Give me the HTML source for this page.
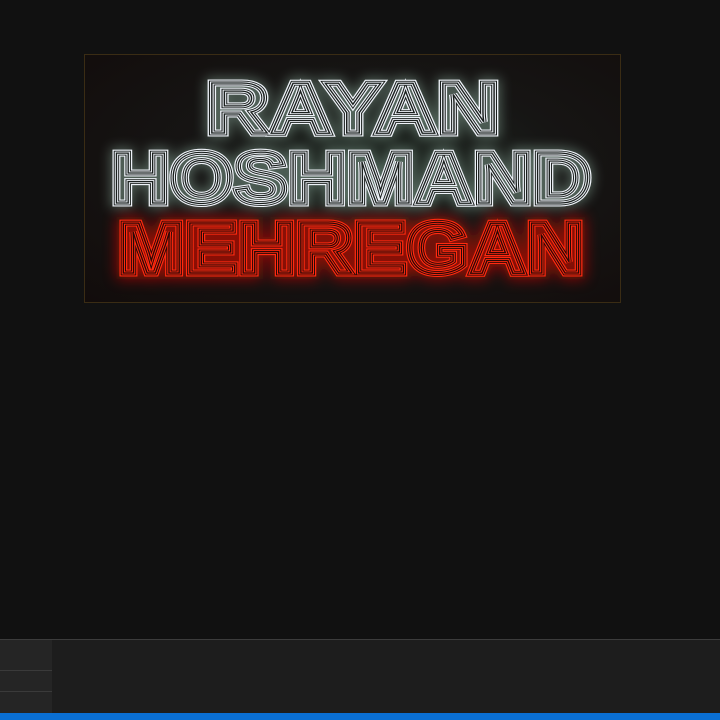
<!DOCTYPE html>
<html><head><style>
html,body{margin:0;padding:0;width:720px;height:720px;overflow:hidden;background:#111;}
.box{position:absolute;left:84px;top:54px;width:535px;height:247px;border:1px solid #3a2c14;background:radial-gradient(ellipse at 55% 45%,#1e2721 0%,#161514 45%,#120c0b 100%);}
.bottom{position:absolute;left:0;top:639px;width:720px;height:74px;background:#1d1d1d;border-top:1px solid #3c3c3c;}
.lp{position:absolute;left:0;top:640px;width:52px;height:73px;background:#252525;}
.lp div{position:absolute;left:0;width:52px;height:1px;background:#3a3a3a;}
.blue{position:absolute;left:0;top:713px;width:720px;height:7px;background:#0a6fd3;}
svg{position:absolute;left:0;top:0;}
</style></head><body>
<div class="box"></div>
<svg width="720" height="320">
<defs>
<filter id="gw" x="-20%" y="-40%" width="140%" height="180%"><feGaussianBlur stdDeviation="6"/></filter>
<filter id="gr" x="-20%" y="-40%" width="140%" height="180%"><feGaussianBlur stdDeviation="7"/></filter>
</defs>
<g font-family="Liberation Sans, sans-serif" font-size="72" font-weight="bold" fill="none" text-anchor="start">
 <g filter="url(#gw)" opacity="0.5">
  <text x="206" y="133" textLength="294" lengthAdjust="spacingAndGlyphs" stroke="#8fb0a0" stroke-width="10">RAYAN</text>
  <text x="111" y="203" textLength="480" lengthAdjust="spacingAndGlyphs" stroke="#8fb0a0" stroke-width="10">HOSHMAND</text>
 </g>
 <g filter="url(#gr)" opacity="0.7">
  <text x="118" y="273" textLength="466" lengthAdjust="spacingAndGlyphs" stroke="#c01000" stroke-width="12">MEHREGAN</text>
 </g>
 <g>
  <text x="206" y="133" textLength="294" lengthAdjust="spacingAndGlyphs" stroke="#eef2f8" stroke-width="7">RAYAN</text>
  <text x="206" y="133" textLength="294" lengthAdjust="spacingAndGlyphs" stroke="#1a1f1d" stroke-width="4.8">RAYAN</text>
  <text x="206" y="133" textLength="294" lengthAdjust="spacingAndGlyphs" stroke="#eef2f8" stroke-width="3">RAYAN</text>
  <text x="206" y="133" textLength="294" lengthAdjust="spacingAndGlyphs" stroke="#1a1f1d" stroke-width="1.2">RAYAN</text>
  <text x="111" y="203" textLength="480" lengthAdjust="spacingAndGlyphs" stroke="#eef2f8" stroke-width="7">HOSHMAND</text>
  <text x="111" y="203" textLength="480" lengthAdjust="spacingAndGlyphs" stroke="#1a1f1d" stroke-width="4.8">HOSHMAND</text>
  <text x="111" y="203" textLength="480" lengthAdjust="spacingAndGlyphs" stroke="#eef2f8" stroke-width="3">HOSHMAND</text>
  <text x="111" y="203" textLength="480" lengthAdjust="spacingAndGlyphs" stroke="#1a1f1d" stroke-width="1.2">HOSHMAND</text>
  <text x="118" y="273" textLength="466" lengthAdjust="spacingAndGlyphs" stroke="#ff2a10" stroke-width="7">MEHREGAN</text>
  <text x="118" y="273" textLength="466" lengthAdjust="spacingAndGlyphs" stroke="#2a0805" stroke-width="4.8">MEHREGAN</text>
  <text x="118" y="273" textLength="466" lengthAdjust="spacingAndGlyphs" stroke="#ff2a10" stroke-width="3">MEHREGAN</text>
  <text x="118" y="273" textLength="466" lengthAdjust="spacingAndGlyphs" stroke="#2a0805" stroke-width="1.2">MEHREGAN</text>
 </g>
</g>
</svg>
<div class="bottom"></div>
<div class="lp"><div style="top:30px"></div><div style="top:51px"></div></div>
<div class="blue"></div>
</body></html>
